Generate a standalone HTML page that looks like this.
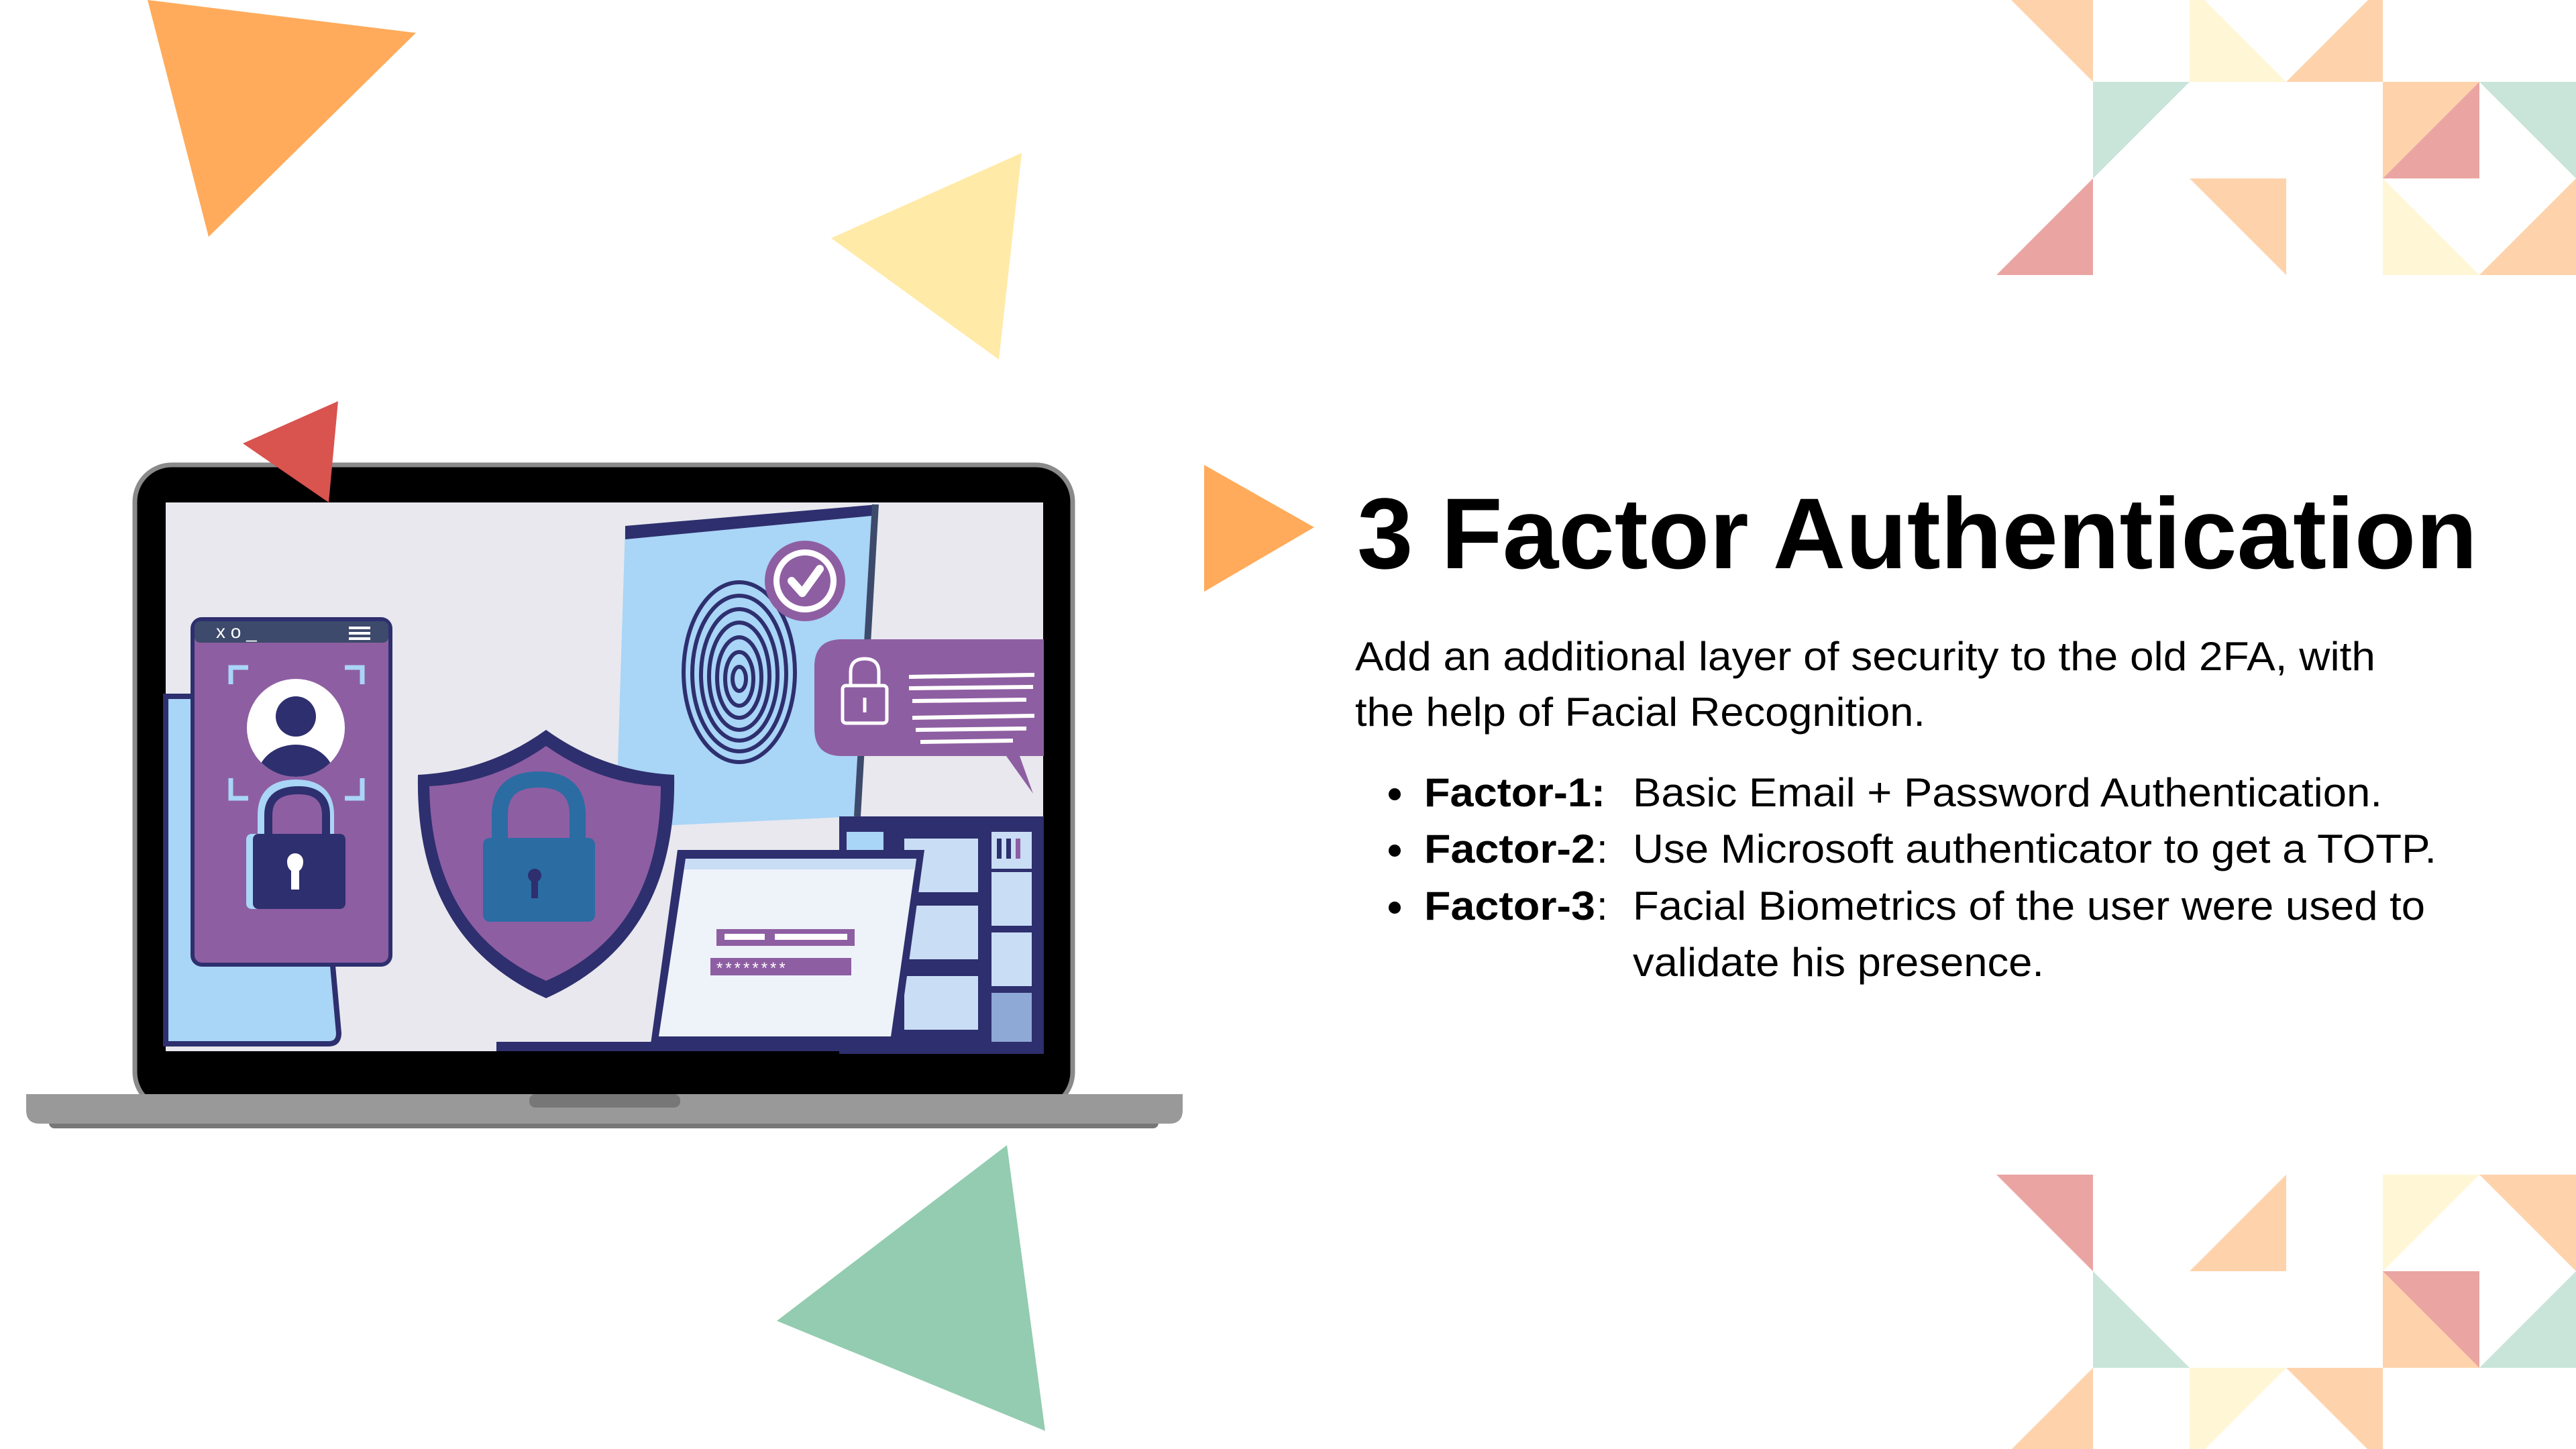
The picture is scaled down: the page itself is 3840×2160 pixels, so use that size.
<!DOCTYPE html>
<html><head><meta charset="utf-8"><style>
html,body{margin:0;padding:0;background:#fff;width:3840px;height:2160px;overflow:hidden}
svg{display:block}
</style></head><body>
<svg width="3840" height="2160" viewBox="0 0 3840 2160" xmlns="http://www.w3.org/2000/svg">
<rect width="3840" height="2160" fill="#fff"/>
<!-- top-right pattern -->
<g>
<polygon fill="#FED3AC" points="2976,-22 3120,-22 3120,122"/>
<polygon fill="#FFF6D5" points="3264,-22 3264,122 3408,122"/>
<polygon fill="#FED3AC" points="3552,-22 3552,122 3408,122"/>
<polygon fill="#C9E5D9" points="3120,122 3264,122 3120,266"/>
<polygon fill="#FED3AC" points="3552,122 3696,122 3552,266"/>
<polygon fill="#EAA5A3" points="3696,122 3696,266 3552,266"/>
<polygon fill="#C9E5D9" points="3696,122 3840,122 3840,266"/>
<polygon fill="#EAA5A3" points="3120,266 3120,410 2976,410"/>
<polygon fill="#FED3AC" points="3264,266 3408,266 3408,410"/>
<polygon fill="#FFF6D5" points="3552,266 3552,410 3696,410"/>
<polygon fill="#FED3AC" points="3840,266 3840,410 3696,410"/>
</g>
<!-- bottom-right pattern -->
<g>
<polygon fill="#EAA5A3" points="2976,1751 3120,1751 3120,1895"/>
<polygon fill="#FED3AC" points="3408,1751 3408,1895 3264,1895"/>
<polygon fill="#FFF6D5" points="3552,1751 3696,1751 3552,1895"/>
<polygon fill="#FED3AC" points="3696,1751 3840,1751 3840,1895"/>
<polygon fill="#C9E5D9" points="3120,1895 3120,2039 3264,2039"/>
<rect fill="#FED3AC" x="3552" y="1895" width="144" height="144"/>
<polygon fill="#EAA5A3" points="3552,1895 3696,1895 3696,2039"/>
<polygon fill="#C9E5D9" points="3840,1895 3840,2039 3696,2039"/>
<polygon fill="#FED3AC" points="3120,2039 3120,2183 2976,2183"/>
<polygon fill="#FFF6D5" points="3264,2039 3408,2039 3264,2183"/>
<polygon fill="#FED3AC" points="3408,2039 3552,2039 3552,2183"/>
</g>
<!-- big triangles -->
<polygon fill="#FFAB5B" points="220,0 620,49 311,353"/>
<polygon fill="#FFEAA7" points="1523,228 1239,355 1489,536"/>
<polygon fill="#93CCB0" points="1501,1707 1158,1969 1558,2133"/>
<polygon fill="#FFAB5B" points="1795,693 1959,786 1795,882"/>

<!-- laptop -->
<rect x="201" y="693" width="1398" height="960" rx="55" fill="#000" stroke="#8a8a8a" stroke-width="7"/>
<rect x="247" y="749" width="1308" height="818" fill="#E8E8EE"/>
<g>
 <!-- fingerprint panel -->
 <polygon points="932,784 1309,752 1280,1217 918,1234" fill="#A9D5F7"/>
 <polygon points="932,784 1309,752 1309,768 932,804" fill="#2E2F6E"/>
 <line x1="1305" y1="752" x2="1278" y2="1217" stroke="#3D4A6B" stroke-width="10"/>
 <g fill="none" stroke="#2E2F6E" stroke-width="6">
  <ellipse cx="1102" cy="1002" rx="83" ry="134"/>
  <ellipse cx="1102" cy="1004" rx="70" ry="116"/>
  <ellipse cx="1102" cy="1006" rx="57" ry="98"/>
  <ellipse cx="1102" cy="1008" rx="45" ry="80"/>
  <ellipse cx="1102" cy="1010" rx="33" ry="60"/>
  <ellipse cx="1102" cy="1012" rx="21" ry="40"/>
  <ellipse cx="1102" cy="1012" rx="10" ry="18"/>
 </g>
 <circle cx="1200" cy="866" r="60" fill="#8E5EA2"/>
 <circle cx="1200" cy="866" r="47" fill="#fff"/>
 <circle cx="1200" cy="866" r="38" fill="#8E5EA2"/>
 <path d="M1180 866 L1196 884 L1222 848" fill="none" stroke="#fff" stroke-width="12" stroke-linecap="round" stroke-linejoin="round"/>
 <!-- speech bubble -->
 <path d="M1255 953 H1556 V1127 H1520 L1540 1183 L1500 1127 H1255 Q1214 1127 1214 1086 V994 Q1214 953 1255 953Z" fill="#8E5EA2"/>
 <g fill="none" stroke="#fff" stroke-width="5">
  <rect x="1256" y="1022" width="66" height="56" rx="5"/>
  <path d="M1268 1022 V1002 Q1268 982 1289 982 Q1310 982 1310 1002 V1022"/>
  <line x1="1289" y1="1040" x2="1289" y2="1062"/>
 </g>
 <g stroke="#fff" stroke-width="6">
  <line x1="1355" y1="1009" x2="1542" y2="1006"/>
  <line x1="1355" y1="1026" x2="1540" y2="1024"/>
  <line x1="1360" y1="1045" x2="1530" y2="1043"/>
  <line x1="1360" y1="1070" x2="1542" y2="1067"/>
  <line x1="1365" y1="1088" x2="1530" y2="1086"/>
  <line x1="1372" y1="1106" x2="1510" y2="1104"/>
 </g>
 <!-- back blue phone -->
 <path d="M247 1038 H460 L505 1540 Q505 1556 490 1556 H247Z" fill="#A9D5F7" stroke="#2E2F6E" stroke-width="8"/>
 <!-- purple phone -->
 <rect x="287" y="923" width="295" height="515" rx="14" fill="#8E5EA2" stroke="#2E2F6E" stroke-width="6"/>
 <rect x="290" y="926" width="289" height="32" rx="8" fill="#3D4A6B"/>
 <text x="322" y="951" font-family="Liberation Sans,sans-serif" font-size="28" fill="#fff">x o _</text>
 <g stroke="#fff" stroke-width="4"><line x1="520" y1="936" x2="552" y2="936"/><line x1="520" y1="944" x2="552" y2="944"/><line x1="520" y1="952" x2="552" y2="952"/></g>
 <g fill="none" stroke="#A9D5F7" stroke-width="7">
  <path d="M344 1020 V995 H370"/><path d="M514 995 H540 V1020"/>
  <path d="M344 1160 V1190 H370"/><path d="M514 1190 H540 V1160"/>
 </g>
 <circle cx="441" cy="1085" r="73" fill="#fff"/>
 <clipPath id="fc"><circle cx="441" cy="1085" r="73"/></clipPath>
 <g clip-path="url(#fc)" fill="#2E2F6E"><circle cx="441" cy="1068" r="30"/><ellipse cx="441" cy="1160" rx="58" ry="50"/></g>
 <path d="M392 1250 V1215 Q392 1170 441 1170 Q490 1170 490 1215 V1250" fill="none" stroke="#A9D5F7" stroke-width="16"/>
 <path d="M400 1250 V1215 Q400 1178 445 1178 Q486 1178 486 1215 V1250" fill="none" stroke="#2E2F6E" stroke-width="12"/>
 <rect x="367" y="1243" width="148" height="112" rx="8" fill="#A9D5F7"/>
 <rect x="377" y="1243" width="138" height="112" rx="8" fill="#2E2F6E"/>
 <path d="M440 1272 a12 12 0 0 1 12 12 q0 10 -6 14 v28 h-12 v-28 q-6 -4 -6 -14 a12 12 0 0 1 12 -12z" fill="#fff"/>
 <!-- shield -->
 <path d="M814 1088 Q900 1150 1005 1155 Q1010 1400 814 1488 Q618 1400 623 1155 Q728 1150 814 1088Z" fill="#2E2F6E"/>
 <path d="M814 1112 Q893 1168 985 1172 Q985 1388 814 1462 Q643 1388 640 1172 Q735 1168 814 1112Z" fill="#8E5EA2"/>
 <path d="M745 1250 V1215 Q745 1162 803 1162 Q861 1162 861 1215 V1250" fill="none" stroke="#2B6CA3" stroke-width="24"/>
 <rect x="720" y="1249" width="167" height="125" rx="10" fill="#2B6CA3"/>
 <circle cx="797" cy="1305" r="10" fill="#2E2F6E"/><rect x="792" y="1305" width="10" height="34" fill="#2E2F6E"/>
 <!-- server rack -->
 <rect x="1251" y="1217" width="305" height="354" fill="#2E2F6E"/>
 <rect x="1262" y="1240" width="55" height="60" fill="#A9D5F7"/>
 <rect x="1348" y="1250" width="110" height="80" fill="#C9DDF5"/>
 <rect x="1348" y="1350" width="110" height="80" fill="#C9DDF5"/>
 <rect x="1348" y="1455" width="110" height="80" fill="#C9DDF5"/>
 <rect x="1478" y="1240" width="60" height="55" fill="#C9DDF5"/>
 <rect x="1478" y="1300" width="60" height="80" fill="#C9DDF5"/>
 <rect x="1478" y="1390" width="60" height="80" fill="#C9DDF5"/>
 <rect x="1478" y="1480" width="60" height="75" fill="#8FA9D6"/>
 <g fill="#2E2F6E"><rect x="1486" y="1250" width="7" height="30"/><rect x="1500" y="1250" width="7" height="30"/><rect x="1514" y="1250" width="7" height="30" fill="#8E5EA2"/></g>
 <!-- small laptop -->
 <polygon points="1010,1267 1378,1267 1338,1556 970,1556" fill="#2E2F6E"/>
 <polygon points="1022,1280 1366,1280 1328,1545 982,1545" fill="#EEF3FA"/>
 <polygon points="1022,1280 1366,1280 1364,1296 1020,1296" fill="#C9DDF5"/>
 <rect x="1068" y="1385" width="206" height="25" fill="#8E5EA2"/>
 <rect x="1080" y="1392" width="60" height="9" fill="#fff"/><rect x="1155" y="1392" width="108" height="9" fill="#fff"/>
 <rect x="1059" y="1428" width="210" height="26" fill="#8E5EA2"/>
 <text x="1068" y="1451" font-family="Liberation Sans,sans-serif" font-size="24" fill="#fff" letter-spacing="4">********</text>
 <rect x="740" y="1553" width="816" height="14" fill="#2E2F6E"/>
</g>
<!-- base -->
<rect x="73" y="1660" width="1654" height="22" rx="8" fill="#777"/>
<path d="M39 1631 H1763 V1655 Q1763 1675 1743 1675 H59 Q39 1675 39 1655Z" fill="#999"/>
<rect x="789" y="1631" width="225" height="20" rx="9" fill="#777"/>
<!-- red triangle -->
<polygon fill="#D9534F" points="504,598 362,661 490,749"/>

<!-- text -->
<g font-family="Liberation Sans, Arial, sans-serif" fill="#000">
 <text x="2023" y="847" font-size="150" font-weight="bold" textLength="1670" lengthAdjust="spacingAndGlyphs">3 Factor Authentication</text>
 <text x="2020" y="999" font-size="60" textLength="1521" lengthAdjust="spacingAndGlyphs">Add an additional layer of security to the old 2FA, with</text>
 <text x="2020" y="1082" font-size="60" textLength="850" lengthAdjust="spacingAndGlyphs">the help of Facial Recognition.</text>
 <circle cx="2079" cy="1184" r="9"/><circle cx="2079" cy="1268" r="9"/><circle cx="2079" cy="1353" r="9"/>
 <text x="2123" y="1202" font-size="60" font-weight="bold" textLength="270" lengthAdjust="spacingAndGlyphs">Factor-1:</text>
 <text x="2123" y="1286" font-size="60" font-weight="bold" textLength="255" lengthAdjust="spacingAndGlyphs">Factor-2</text>
 <text x="2380" y="1286" font-size="60">:</text>
 <text x="2123" y="1371" font-size="60" font-weight="bold" textLength="255" lengthAdjust="spacingAndGlyphs">Factor-3</text>
 <text x="2380" y="1371" font-size="60">:</text>
 <text x="2434" y="1202" font-size="60" textLength="1117" lengthAdjust="spacingAndGlyphs">Basic Email + Password Authentication.</text>
 <text x="2434" y="1286" font-size="60" textLength="1198" lengthAdjust="spacingAndGlyphs">Use Microsoft authenticator to get a TOTP.</text>
 <text x="2434" y="1371" font-size="60" textLength="1181" lengthAdjust="spacingAndGlyphs">Facial Biometrics of the user were used to</text>
 <text x="2434" y="1455" font-size="60" textLength="613" lengthAdjust="spacingAndGlyphs">validate his presence.</text>
</g>
</svg>
</body></html>
